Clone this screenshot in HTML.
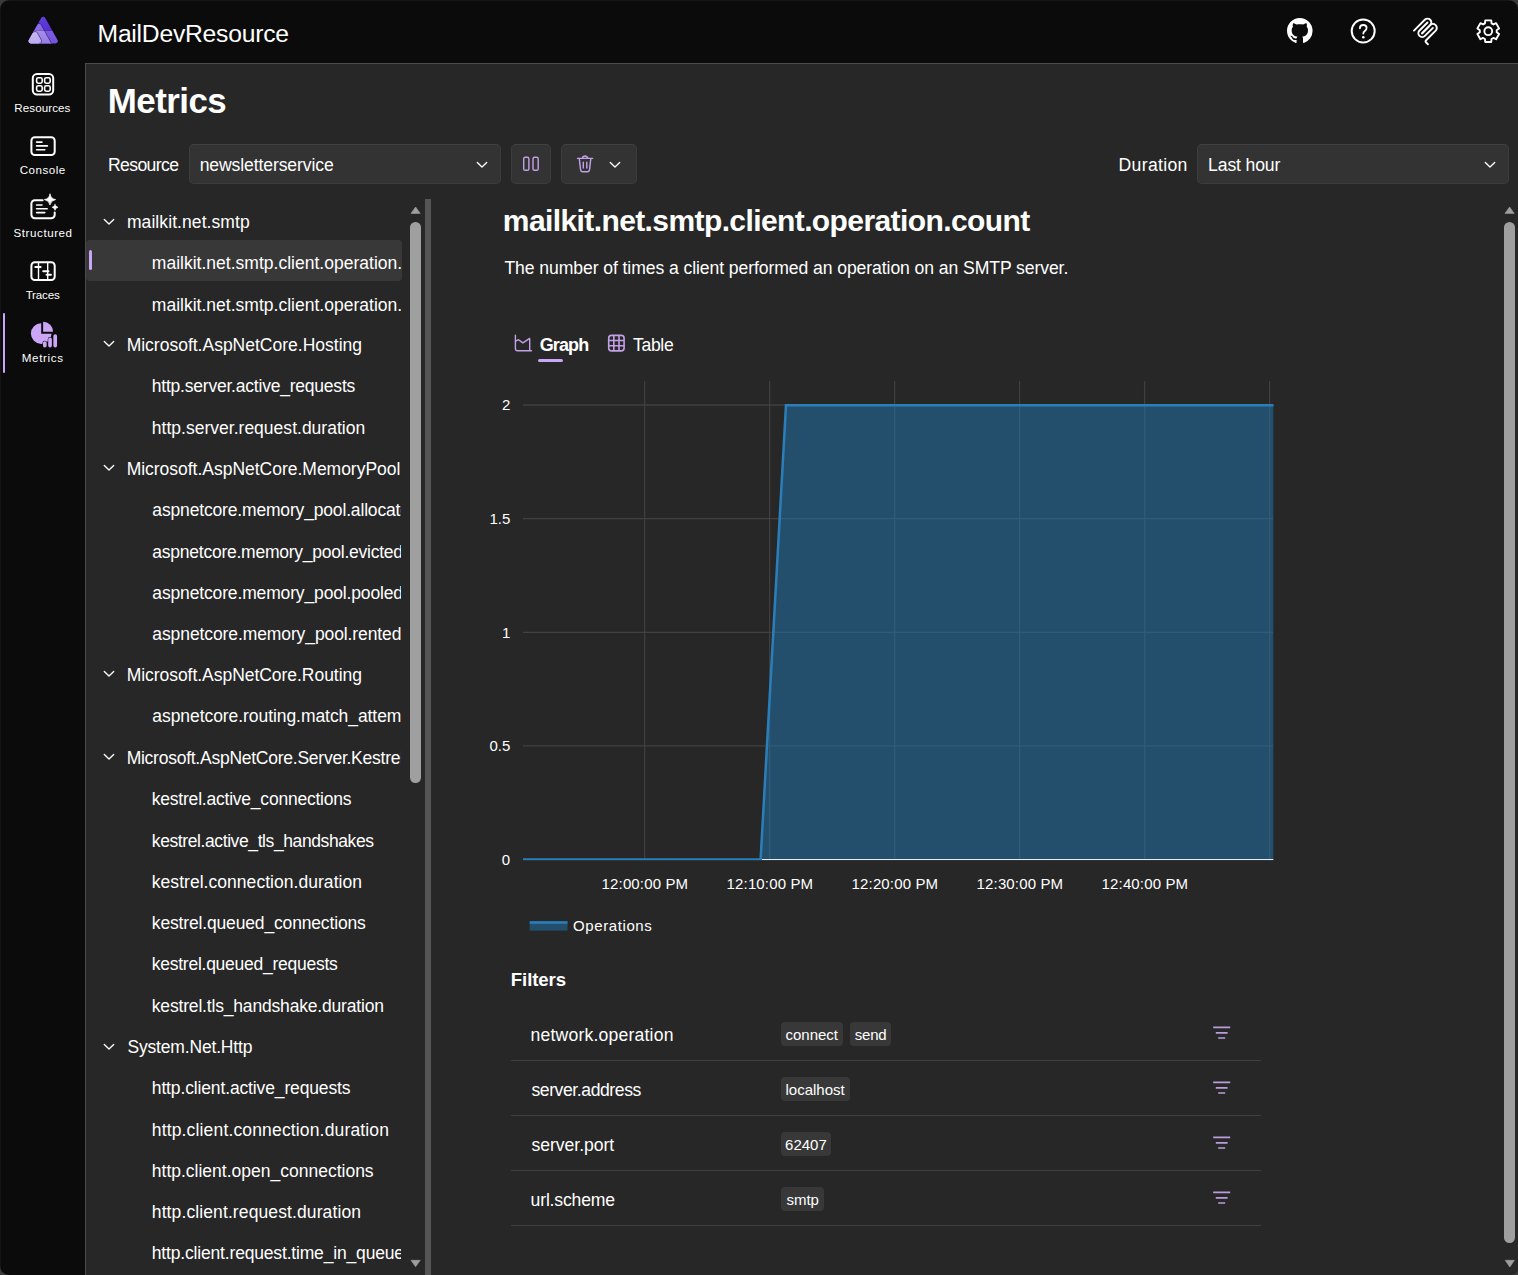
<!DOCTYPE html>
<html lang="en"><head><meta charset="utf-8"><title>MailDevResource - Metrics</title><style>
*{box-sizing:border-box}
html,body{margin:0;padding:0}
body{width:1518px;height:1275px;position:relative;overflow:hidden;background:#0b0b0b;color:#fff;font-family:"Liberation Sans",sans-serif;}
.abs{position:absolute;display:block}
.t{position:absolute;white-space:pre;color:#fff;line-height:0}
.t::before{content:"";display:inline-block;width:0;height:40px}
.k{transform:scale(0.9375);transform-origin:0 40px}
.hdr,.nav,.main{position:absolute;left:0;top:0;width:0;height:0}
.mainbg{position:absolute;left:85px;top:63px;width:1433px;height:1212px;background:#272727;border-left:1px solid #4a4a4a;border-top:1px solid #4a4a4a}
.sel{position:absolute;background:#333;border:1px solid #3c3c3c;border-top-color:#414141;border-radius:5px}
.tree{position:absolute;left:86px;top:200px;width:315.3px;height:1075px;overflow:hidden}
</style></head><body>
<header class="hdr">
<svg class="abs" style="left:24px;top:12.7px" width="38" height="34" viewBox="24 13 38 34">
<defs>
<clipPath id="tri"><path d="M41.160 17.900 A2.340 2.340 0 0 1 45.240 17.900 L57.550 39.920 A2.340 2.340 0 0 1 55.510 43.400 L30.890 43.400 A2.340 2.340 0 0 1 28.850 39.920 Z"/></clipPath>
<linearGradient id="lg1" x1="0" y1="0" x2="0.600" y2="1"><stop offset="0" stop-color="#6b47e1"/><stop offset="1" stop-color="#5630d6"/></linearGradient>
<linearGradient id="lg2" x1="0" y1="0" x2="0.600" y2="1"><stop offset="0" stop-color="#8262e4"/><stop offset="1" stop-color="#7350dc"/></linearGradient>
<linearGradient id="lg3" x1="0" y1="0" x2="0" y2="1"><stop offset="0" stop-color="#8b70e4"/><stop offset="1" stop-color="#7d5fde"/></linearGradient>
<linearGradient id="lg4" x1="0" y1="0" x2="0.500" y2="1"><stop offset="0" stop-color="#ab95ef"/><stop offset="1" stop-color="#957ce5"/></linearGradient>
<linearGradient id="lg5" x1="0" y1="0" x2="0.300" y2="1"><stop offset="0" stop-color="#c8baf3"/><stop offset="1" stop-color="#bcaaee"/></linearGradient>
</defs>
<g clip-path="url(#tri)">
<rect x="24" y="13" width="38" height="17.500" fill="url(#lg1)"/>
<rect x="24" y="30.500" width="38" height="17" fill="url(#lg2)"/>
<path d="M20 46 L37.500 24.430 A2 2 0 0 1 40.980 24.430 L44.380 30.500 L20 30.500 Z" fill="url(#lg3)"/>
<path d="M20 30.500 L44.380 30.500 L53.060 46 L20 46 Z" fill="url(#lg4)"/>
<path d="M30 30.500 H57" stroke="#2a1580" stroke-opacity="0.450" stroke-width="0.450"/>
<path d="M37.500 24.430 A2 2 0 0 1 40.980 24.430 L53.060 46" fill="none" stroke="#190b4d" stroke-width="0.550"/>
<path d="M20 46 L32.790 32.840 A2.600 2.600 0 0 1 37.330 32.840 L41.340 39.980 A2.300 2.300 0 0 1 39.330 43.400 L39.330 46 Z" fill="url(#lg5)"/>
<path d="M32.790 32.840 A2.600 2.600 0 0 1 37.330 32.840 L41.340 39.980 A2.300 2.300 0 0 1 39.330 43.400" fill="none" stroke="#190b4d" stroke-width="0.550"/>
</g>
</svg>
<span class="t" style="left:97.57px;top:1.70px;font-size:24.7px;letter-spacing:-0.242px;">MailDevResource</span>
<svg class="abs" style="left:1287.3px;top:18.2px" width="25.6" height="25.6" viewBox="0 0 16 16"><path fill="#fff" d="M8 0C3.58 0 0 3.58 0 8c0 3.54 2.29 6.53 5.47 7.59.4.07.55-.17.55-.38 0-.19-.01-.82-.01-1.49-2.01.37-2.53-.49-2.69-.94-.09-.23-.48-.94-.82-1.13-.28-.15-.68-.52-.01-.53.63-.01 1.08.58 1.23.82.72 1.21 1.87.87 2.33.66.07-.52.28-.87.51-1.07-1.78-.2-3.64-.89-3.64-3.95 0-.87.31-1.59.82-2.15-.08-.2-.36-1.02.08-2.12 0 0 .67-.21 2.2.82.64-.18 1.32-.27 2-.27s1.36.09 2 .27c1.53-1.04 2.2-.82 2.2-.82.44 1.1.16 1.92.08 2.12.51.56.82 1.27.82 2.15 0 3.07-1.87 3.75-3.65 3.95.29.25.54.73.54 1.48 0 1.07-.01 1.93-.01 2.2 0 .21.15.46.55.38A8.01 8.01 0 0 0 16 8c0-4.42-3.58-8-8-8Z"/></svg>
<svg class="abs" style="left:1347.7px;top:16px" width="30" height="30" viewBox="0 0 30 30"><circle cx="15.2" cy="15" r="11.5" fill="none" stroke="#fff" stroke-width="2"/><path d="M11.9 12.3c0-2 1.5-3.3 3.4-3.3s3.3 1.3 3.3 3c0 1.500-.8 2.200-1.800 3.000-.9.700-1.500 1.300-1.500 2.600" fill="none" stroke="#fff" stroke-width="1.8" stroke-linecap="round"/><circle cx="15.3" cy="21.2" r="1.3" fill="#fff"/></svg>
<svg class="abs" style="left:1410.1px;top:15.3px" width="31.1" height="31.1" viewBox="0 0 195 195" fill="none" stroke="#fff" stroke-width="12" stroke-linecap="round">
<path d="M25 97.8528L92.8823 29.9706C102.255 20.598 117.451 20.598 126.823 29.9706V29.9706C136.196 39.3431 136.196 54.5391 126.823 63.9117L75.5581 115.177"/>
<path d="M76.2653 114.47L126.823 63.9117C136.196 54.5391 151.392 54.5391 160.765 63.9117L161.118 64.2652C170.491 73.6378 170.491 88.8338 161.118 98.2063L99.7248 159.6C96.6006 162.724 96.6006 167.789 99.7248 170.913L112.331 183.52"/>
<path d="M109.853 46.9411L59.6482 97.1457C50.2757 106.518 50.2757 121.714 59.6482 131.087V131.087C69.0208 140.459 84.2168 140.459 93.5894 131.087L143.794 80.8822"/>
</svg>
<svg class="abs" style="left:1473px;top:16px" width="30" height="30" viewBox="0 0 30 30"><path d="M11.94 7.37 L12.26 4.41 L18.24 4.41 L18.56 7.37 L20.38 8.42 L23.10 7.22 L26.09 12.39 L23.69 14.15 L23.69 16.25 L26.09 18.01 L23.10 23.18 L20.38 21.98 L18.56 23.03 L18.24 25.99 L12.26 25.99 L11.94 23.03 L10.12 21.98 L7.40 23.18 L4.41 18.01 L6.81 16.25 L6.81 14.15 L4.41 12.39 L7.40 7.22 L10.12 8.42 Z" fill="none" stroke="#fff" stroke-width="1.9" stroke-linejoin="round"/><circle cx="15.250" cy="15.200" r="3.900" fill="none" stroke="#fff" stroke-width="1.9"/></svg>
</header>
<nav class="nav">
<svg class="abs" style="left:28px;top:69px" width="30" height="30" viewBox="28 69 30 30" fill="none" stroke="#fff">
<rect x="32.800" y="73.900" width="20.400" height="20.500" rx="4.200" stroke-width="2"/>
<rect x="36.6" y="77.8" width="5.6" height="5.4" rx="1.6" stroke-width="1.6"/><rect x="44.6" y="77.8" width="5.6" height="5.4" rx="1.6" stroke-width="1.6"/>
<rect x="36.6" y="85.8" width="5.6" height="5.4" rx="1.6" stroke-width="1.6"/><rect x="44.6" y="85.8" width="5.6" height="5.4" rx="1.6" stroke-width="1.6"/>
</svg>
<span class="t" style="left:14.30px;top:71.70px;font-size:11.6px;letter-spacing:0.079px;">Resources</span>
<svg class="abs" style="left:28px;top:131px" width="30" height="30" viewBox="28 131 30 30" fill="none" stroke="#fff" stroke-linecap="round">
<rect x="31.4" y="137.3" width="23.3" height="17.8" rx="3.4" stroke-width="2"/>
<path d="M36.6 142.1H42M36.6 145.9H47.4M36.6 149.7H44.8" stroke-width="1.6"/>
</svg>
<span class="t" style="left:19.75px;top:133.70px;font-size:11.6px;letter-spacing:0.486px;">Console</span>
<svg class="abs" style="left:28px;top:190px" width="32" height="32" viewBox="28 190 32 32" fill="none" stroke="#fff" stroke-linecap="round">
<path d="M42.6 200.2H34.8a3.4 3.4 0 0 0-3.4 3.4V214.800a3.400 3.400 0 0 0 3.400 3.400H51.300a3.400 3.400 0 0 0 3.400-3.400V212.600" stroke-width="2"/>
<path d="M36.6 205H42M36.6 208.8H47.2M36.6 212.6H44.8" stroke-width="1.6"/>
<path d="M50 194.200 Q50.800 198.800 55.600 199.600 Q50.800 200.400 50 205 Q49.200 200.400 44.400 199.600 Q49.200 198.800 50 194.200Z" fill="#fff" stroke="#fff" stroke-width="0.8" stroke-linejoin="round"/>
<path d="M55 204.300 Q55.500 206.900 58.100 207.300 Q55.500 207.800 55 210.400 Q54.500 207.800 51.900 207.300 Q54.500 206.900 55 204.300Z" fill="#fff" stroke="#fff" stroke-width="0.5" stroke-linejoin="round"/>
</svg>
<span class="t" style="left:13.55px;top:196.50px;font-size:11.6px;letter-spacing:0.557px;">Structured</span>
<svg class="abs" style="left:28px;top:256px" width="30" height="30" viewBox="28 256 30 30" fill="none" stroke="#fff" stroke-linecap="round">
<rect x="31.4" y="262.3" width="23.3" height="17.8" rx="3.4" stroke-width="2"/>
<path d="M38.5 262.5V280M47.7 262.5V280" stroke-width="1.4"/>
<path d="M35.4 267H40.6M43.300 271.250H48.400M46.600 274.800H50.900" stroke-width="2.1"/>
</svg>
<span class="t" style="left:25.65px;top:258.70px;font-size:11.6px;letter-spacing:-0.190px;">Traces</span>
<svg class="abs" style="left:28px;top:318px" width="32" height="32" viewBox="28 318 32 32">
<path d="M41.200 323.300 A10.300 10.300 0 1 0 51.500 333.800 L41.200 333.800 Z" fill="#cba6f7"/>
<path d="M43.100 321.700 A10 10 0 0 1 53.100 331.800 L43.100 331.800 Z" fill="#cba6f7"/>
<g stroke="#0b0b0b" stroke-width="4.6" stroke-linecap="round"><path d="M44.800 343.100V345.600M50.050 339.400V345.600M55.200 336.100V345.600"/></g>
<g stroke="#cba6f7" stroke-width="3.7" stroke-linecap="round"><path d="M44.800 343.100V345.600M50.050 339.400V345.600M55.200 336.100V345.600"/></g>
</svg>
<span class="t" style="left:21.75px;top:321.60px;font-size:11.6px;letter-spacing:0.665px;">Metrics</span>
<div class="abs" style="left:3px;top:313.2px;width:2.2px;height:59.4px;background:#cba6f7;border-radius:1px"></div>
</nav>
<div class="mainbg"></div>
<div class="abs" style="left:0;top:0;width:1518px;height:1px;background:#161616"></div><div class="abs" style="left:0;top:0;width:1px;height:1275px;background:#131313"></div>
<main class="main">
<span class="t" style="left:107.82px;top:73.30px;font-size:34.9px;letter-spacing:-0.545px;font-weight:700;">Metrics</span>
<span class="t" style="left:107.92px;top:130.80px;font-size:17.6px;letter-spacing:-0.601px;">Resource</span>
<div class="sel" style="left:189px;top:144.3px;width:312px;height:39.4px"></div>
<span class="t" style="left:199.70px;top:130.80px;font-size:17.6px;letter-spacing:-0.119px;">newsletterservice</span>
<svg class="abs" style="left:475.60px;top:160.60px" width="12" height="8" viewBox="0 0 12 8"><path d="M1.300 1.500 L6 6 L10.700 1.500" fill="none" stroke="#fff" stroke-width="1.350" stroke-linecap="round" stroke-linejoin="round"/></svg>
<div class="sel" style="left:511px;top:144.3px;width:40px;height:39.4px"></div>
<svg class="abs" style="left:521px;top:154px" width="20" height="20" viewBox="521 154 20 20" fill="none" stroke="#c3a1e8" stroke-width="1.4"><rect x="523.7" y="157.3" width="5.2" height="13" rx="1.6"/><rect x="533" y="157.3" width="5.2" height="13" rx="1.6"/></svg>
<div class="sel" style="left:561px;top:144.3px;width:76px;height:39.4px"></div>
<svg class="abs" style="left:575px;top:153px" width="20" height="22" viewBox="575 153 20 22" fill="none" stroke="#c3a1e8" stroke-width="1.4" stroke-linecap="round" stroke-linejoin="round">
<path d="M577.5 158.400H592.600M582.400 158.200a2.700 2.700 0 0 1 5.300 0M579.300 158.600l1.300 11.300a2.200 2.200 0 0 0 2.200 1.900h4.500a2.200 2.200 0 0 0 2.200-1.900l1.300-11.300M583.300 162.300v5.700M586.800 162.300v5.700"/></svg>
<svg class="abs" style="left:609.20px;top:160.70px" width="12" height="8" viewBox="0 0 12 8"><path d="M1.300 1.500 L6 6 L10.700 1.500" fill="none" stroke="#fff" stroke-width="1.350" stroke-linecap="round" stroke-linejoin="round"/></svg>
<span class="t" style="left:1118.62px;top:130.80px;font-size:17.6px;letter-spacing:0.309px;">Duration</span>
<div class="sel" style="left:1197px;top:144.3px;width:312px;height:39.4px"></div>
<span class="t" style="left:1208.12px;top:130.80px;font-size:17.6px;letter-spacing:-0.137px;">Last hour</span>
<svg class="abs" style="left:1483.50px;top:160.60px" width="12" height="8" viewBox="0 0 12 8"><path d="M1.300 1.500 L6 6 L10.700 1.500" fill="none" stroke="#fff" stroke-width="1.350" stroke-linecap="round" stroke-linejoin="round"/></svg>
<div class="abs" style="left:86px;top:240.250px;width:316px;height:40.800px;background:#383838;border-radius:4px"></div>
<div class="tree">
<svg class="abs" style="left:17.30px;top:17.70px" width="12" height="8" viewBox="0 0 12 8"><path d="M1.300 1.500 L6 6 L10.700 1.500" fill="none" stroke="#fff" stroke-width="1.350" stroke-linecap="round" stroke-linejoin="round"/></svg>
<span class="t" style="left:40.91px;top:-12.00px;font-size:17.5px;letter-spacing:0.083px;">mailkit.net.smtp</span>
<div class="abs" style="left:3.2px;top:50.05px;width:3.2px;height:20.4px;background:#cba6f7;border-radius:1.6px"></div>
<span class="t" style="left:65.81px;top:29.00px;font-size:17.5px;letter-spacing:0.012px;">mailkit.net.smtp.client.operation.count</span>
<span class="t" style="left:65.81px;top:71.00px;font-size:17.5px;letter-spacing:0.012px;">mailkit.net.smtp.client.operation.duration</span>
<svg class="abs" style="left:17.30px;top:140.45px" width="12" height="8" viewBox="0 0 12 8"><path d="M1.300 1.500 L6 6 L10.700 1.500" fill="none" stroke="#fff" stroke-width="1.350" stroke-linecap="round" stroke-linejoin="round"/></svg>
<span class="t" style="left:40.63px;top:111.00px;font-size:17.5px;">Microsoft.AspNetCore.Hosting</span>
<span class="t" style="left:65.81px;top:152.00px;font-size:17.5px;letter-spacing:-0.217px;">http.server.active_requests</span>
<span class="t" style="left:65.81px;top:194.00px;font-size:17.5px;letter-spacing:0.014px;">http.server.request.duration</span>
<svg class="abs" style="left:17.30px;top:264.20px" width="12" height="8" viewBox="0 0 12 8"><path d="M1.300 1.500 L6 6 L10.700 1.500" fill="none" stroke="#fff" stroke-width="1.350" stroke-linecap="round" stroke-linejoin="round"/></svg>
<span class="t" style="left:40.63px;top:235.00px;font-size:17.5px;letter-spacing:-0.016px;">Microsoft.AspNetCore.MemoryPool</span>
<span class="t" style="left:66.35px;top:276.00px;font-size:17.5px;letter-spacing:-0.166px;">aspnetcore.memory_pool.allocated</span>
<span class="t" style="left:66.35px;top:318.00px;font-size:17.5px;letter-spacing:-0.246px;">aspnetcore.memory_pool.evicted</span>
<span class="t" style="left:66.35px;top:359.00px;font-size:17.5px;letter-spacing:-0.148px;">aspnetcore.memory_pool.pooled</span>
<span class="t" style="left:66.35px;top:400.00px;font-size:17.5px;letter-spacing:-0.101px;">aspnetcore.memory_pool.rented</span>
<svg class="abs" style="left:17.30px;top:470.45px" width="12" height="8" viewBox="0 0 12 8"><path d="M1.300 1.500 L6 6 L10.700 1.500" fill="none" stroke="#fff" stroke-width="1.350" stroke-linecap="round" stroke-linejoin="round"/></svg>
<span class="t" style="left:40.63px;top:441.00px;font-size:17.5px;letter-spacing:-0.037px;">Microsoft.AspNetCore.Routing</span>
<span class="t" style="left:66.35px;top:482.00px;font-size:17.5px;letter-spacing:-0.066px;">aspnetcore.routing.match_attempts</span>
<svg class="abs" style="left:17.30px;top:552.95px" width="12" height="8" viewBox="0 0 12 8"><path d="M1.300 1.500 L6 6 L10.700 1.500" fill="none" stroke="#fff" stroke-width="1.350" stroke-linecap="round" stroke-linejoin="round"/></svg>
<span class="t" style="left:40.63px;top:524.00px;font-size:17.5px;letter-spacing:-0.249px;">Microsoft.AspNetCore.Server.Kestrel</span>
<span class="t" style="left:65.81px;top:565.00px;font-size:17.5px;letter-spacing:-0.220px;">kestrel.active_connections</span>
<span class="t" style="left:65.81px;top:607.00px;font-size:17.5px;letter-spacing:-0.401px;">kestrel.active_tls_handshakes</span>
<span class="t" style="left:65.81px;top:648.00px;font-size:17.5px;letter-spacing:0.039px;">kestrel.connection.duration</span>
<span class="t" style="left:65.81px;top:689.00px;font-size:17.5px;letter-spacing:-0.158px;">kestrel.queued_connections</span>
<span class="t" style="left:65.81px;top:730.00px;font-size:17.5px;letter-spacing:-0.257px;">kestrel.queued_requests</span>
<span class="t" style="left:65.81px;top:772.00px;font-size:17.5px;letter-spacing:-0.179px;">kestrel.tls_handshake.duration</span>
<svg class="abs" style="left:17.30px;top:842.70px" width="12" height="8" viewBox="0 0 12 8"><path d="M1.300 1.500 L6 6 L10.700 1.500" fill="none" stroke="#fff" stroke-width="1.350" stroke-linecap="round" stroke-linejoin="round"/></svg>
<span class="t" style="left:41.45px;top:813.00px;font-size:17.5px;letter-spacing:-0.171px;">System.Net.Http</span>
<span class="t" style="left:65.81px;top:854.00px;font-size:17.5px;letter-spacing:-0.138px;">http.client.active_requests</span>
<span class="t" style="left:65.81px;top:896.00px;font-size:17.5px;letter-spacing:0.155px;">http.client.connection.duration</span>
<span class="t" style="left:65.81px;top:937.00px;font-size:17.5px;">http.client.open_connections</span>
<span class="t" style="left:65.81px;top:978.00px;font-size:17.5px;letter-spacing:0.109px;">http.client.request.duration</span>
<span class="t" style="left:65.81px;top:1019.00px;font-size:17.5px;letter-spacing:-0.174px;">http.client.request.time_in_queue</span>
</div>
<svg class="abs" style="left:409px;top:205px" width="13" height="10" viewBox="409 205 13 10"><path d="M411 213.400 L415.600 207 L420.200 213.400 Z" fill="#9f9f9f" stroke="#9f9f9f" stroke-width="0.6" stroke-linejoin="round"/></svg>
<div class="abs" style="left:410.4px;top:221.700px;width:10.8px;height:561px;background:#9f9f9f;border-radius:5.4px"></div>
<svg class="abs" style="left:409px;top:1258px" width="13" height="10" viewBox="409 1258 13 10"><path d="M411 1260.300 L415.600 1266.700 L420.200 1260.300 Z" fill="#9f9f9f" stroke="#9f9f9f" stroke-width="0.6" stroke-linejoin="round"/></svg>
<div class="abs" style="left:425px;top:198.700px;width:6px;height:1077px;background:#555"></div>
<span class="t" style="left:502.82px;top:190.50px;font-size:30px;letter-spacing:-0.598px;font-weight:700;">mailkit.net.smtp.client.operation.count</span>
<span class="t" style="left:504.43px;top:233.70px;font-size:17.6px;letter-spacing:-0.086px;">The number of times a client performed an operation on an SMTP server.</span>
<svg class="abs" style="left:512px;top:333px" width="22" height="21" viewBox="512 333 22 21" fill="none" stroke="#c3a1e8" stroke-width="1.4" stroke-linecap="round" stroke-linejoin="round"><path d="M515.400 335.300V348.600a2.200 2.200 0 0 0 2.200 2.200H531.500M529.700 350.600V338.400L522.900 342.900L518.500 339.700L515.700 341.200"/></svg>
<span class="t" style="left:539.74px;top:310.50px;font-size:18px;letter-spacing:-0.894px;font-weight:700;">Graph</span>
<div class="abs" style="left:538px;top:358.600px;width:25px;height:3.5px;background:#cba6f7;border-radius:1.75px"></div>
<svg class="abs" style="left:606px;top:333px" width="21" height="21" viewBox="606 333 21 21" fill="none" stroke="#c3a1e8" stroke-width="1.600"><rect x="608.700" y="335.400" width="15.400" height="15.500" rx="2.800"/><path d="M613.800 335.400V350.900M619 335.400V350.900M608.700 340.500H624.100M608.700 345.700H624.100"/></svg>
<span class="t" style="left:633.02px;top:310.50px;font-size:17.6px;letter-spacing:-0.343px;">Table</span>
<svg class="abs" style="left:480px;top:370px" width="820" height="580" viewBox="480 370 820 580"><line x1="644.6" y1="381" x2="644.6" y2="859" stroke="#3f3f3f" stroke-width="1.25"/><line x1="769.6" y1="381" x2="769.6" y2="859" stroke="#3f3f3f" stroke-width="1.25"/><line x1="894.6" y1="381" x2="894.6" y2="859" stroke="#3f3f3f" stroke-width="1.25"/><line x1="1019.6" y1="381" x2="1019.6" y2="859" stroke="#3f3f3f" stroke-width="1.25"/><line x1="1144.6" y1="381" x2="1144.6" y2="859" stroke="#3f3f3f" stroke-width="1.25"/><line x1="1269.6" y1="381" x2="1269.6" y2="859" stroke="#3f3f3f" stroke-width="1.25"/><line x1="523" y1="405" x2="1273" y2="405" stroke="#414141" stroke-width="1.3"/><line x1="523" y1="518.6" x2="1273" y2="518.6" stroke="#414141" stroke-width="1.3"/><line x1="523" y1="632.3" x2="1273" y2="632.3" stroke="#414141" stroke-width="1.3"/><line x1="523" y1="745.9" x2="1273" y2="745.9" stroke="#414141" stroke-width="1.3"/><clipPath id="plot"><rect x="523" y="381" width="750.600" height="479.200"/></clipPath><g clip-path="url(#plot)"><path d="M523 859.600 L760.600 859.600 L786 405.200 L1273.600 405.200 L1273.600 859.600 Z" fill="rgba(31,119,180,0.5)"/><line x1="762" y1="859.650" x2="1273.600" y2="859.650" stroke="#e3ecf4" stroke-width="1.300"/><path d="M523 859.600 L760.600 859.600 L786 405.200 L1275 405.200" fill="none" stroke="#2a7fba" stroke-width="2.500" stroke-linejoin="miter"/></g><rect x="529.700" y="921.300" width="37.800" height="9.300" fill="rgba(31,119,180,0.5)"/><line x1="529.700" y1="922.500" x2="567.500" y2="922.500" stroke="#2a7fba" stroke-width="2.5"/></svg>
<span class="t" style="left:501.97px;top:370.40px;font-size:15px;">2</span>
<span class="t" style="left:489.46px;top:484.00px;font-size:15px;">1.5</span>
<span class="t" style="left:501.97px;top:597.70px;font-size:15px;">1</span>
<span class="t" style="left:489.46px;top:711.30px;font-size:15px;">0.5</span>
<span class="t" style="left:501.73px;top:824.80px;font-size:15px;">0</span>
<span class="t" style="left:601.61px;top:849.20px;font-size:15px;letter-spacing:0.139px;">12:00:00 PM</span>
<span class="t" style="left:726.61px;top:849.20px;font-size:15px;letter-spacing:0.139px;">12:10:00 PM</span>
<span class="t" style="left:851.61px;top:849.20px;font-size:15px;letter-spacing:0.139px;">12:20:00 PM</span>
<span class="t" style="left:976.61px;top:849.20px;font-size:15px;letter-spacing:0.139px;">12:30:00 PM</span>
<span class="t" style="left:1101.61px;top:849.20px;font-size:15px;letter-spacing:0.139px;">12:40:00 PM</span>
<span class="t" style="left:573.10px;top:890.80px;font-size:15px;letter-spacing:0.589px;">Operations</span>
<span class="t" style="left:510.84px;top:945.80px;font-size:18.6px;letter-spacing:-0.097px;font-weight:700;">Filters</span>
<span class="t" style="left:530.60px;top:1000.80px;font-size:17.6px;letter-spacing:0.189px;">network.operation</span>
<div class="abs" style="left:781.2px;top:1022.2px;width:61.6px;height:23.6px;background:#383838;border-radius:4px"></div>
<span class="t" style="left:785.48px;top:999.70px;font-size:15px;letter-spacing:-0.003px;">connect</span>
<div class="abs" style="left:850px;top:1022.2px;width:40.8px;height:23.6px;background:#383838;border-radius:4px"></div>
<span class="t" style="left:854.87px;top:999.70px;font-size:15px;letter-spacing:-0.283px;">send</span>
<svg class="abs" style="left:1211px;top:1024px" width="22" height="18" viewBox="0 0 22 18" stroke="#bb9ddb" stroke-width="1.700" stroke-linecap="butt"><path d="M2.200 3.400H19.200M4.800 8.800H16.600M7.200 14H14.200"/></svg>
<div class="abs" style="left:511px;top:1059.8px;width:750px;height:1px;background:#404040"></div>
<span class="t" style="left:531.43px;top:1055.80px;font-size:17.6px;letter-spacing:-0.420px;">server.address</span>
<div class="abs" style="left:781.2px;top:1077.2px;width:68.8px;height:23.6px;background:#383838;border-radius:4px"></div>
<span class="t" style="left:785.50px;top:1054.70px;font-size:15px;">localhost</span>
<svg class="abs" style="left:1211px;top:1079px" width="22" height="18" viewBox="0 0 22 18" stroke="#bb9ddb" stroke-width="1.700" stroke-linecap="butt"><path d="M2.200 3.400H19.200M4.800 8.800H16.600M7.200 14H14.200"/></svg>
<div class="abs" style="left:511px;top:1114.8px;width:750px;height:1px;background:#404040"></div>
<span class="t" style="left:531.43px;top:1110.80px;font-size:17.6px;letter-spacing:-0.030px;">server.port</span>
<div class="abs" style="left:781.2px;top:1132.2px;width:49.6px;height:23.6px;background:#383838;border-radius:4px"></div>
<span class="t" style="left:785.10px;top:1109.70px;font-size:15px;">62407</span>
<svg class="abs" style="left:1211px;top:1134px" width="22" height="18" viewBox="0 0 22 18" stroke="#bb9ddb" stroke-width="1.700" stroke-linecap="butt"><path d="M2.200 3.400H19.200M4.800 8.800H16.600M7.200 14H14.200"/></svg>
<div class="abs" style="left:511px;top:1169.8px;width:750px;height:1px;background:#404040"></div>
<span class="t" style="left:530.60px;top:1165.80px;font-size:17.6px;letter-spacing:-0.181px;">url.scheme</span>
<div class="abs" style="left:781.2px;top:1187.2px;width:42.6px;height:23.6px;background:#383838;border-radius:4px"></div>
<span class="t" style="left:786.43px;top:1164.70px;font-size:15px;">smtp</span>
<svg class="abs" style="left:1211px;top:1189px" width="22" height="18" viewBox="0 0 22 18" stroke="#bb9ddb" stroke-width="1.700" stroke-linecap="butt"><path d="M2.200 3.400H19.200M4.800 8.800H16.600M7.200 14H14.200"/></svg>
<div class="abs" style="left:511px;top:1224.8px;width:750px;height:1px;background:#404040"></div>
<svg class="abs" style="left:1503px;top:205px" width="13" height="10" viewBox="1503 205 13 10"><path d="M1505 213.400 L1509.600 207 L1514.200 213.400 Z" fill="#9f9f9f" stroke="#9f9f9f" stroke-width="0.6" stroke-linejoin="round"/></svg>
<div class="abs" style="left:1504.200px;top:221.700px;width:11px;height:1021.500px;background:#9f9f9f;border-radius:5.500px"></div>
<svg class="abs" style="left:1503px;top:1258px" width="13" height="10" viewBox="1503 1258 13 10"><path d="M1505.200 1260.300 L1509.800 1267 L1514.400 1260.300 Z" fill="#9f9f9f" stroke="#9f9f9f" stroke-width="0.6" stroke-linejoin="round"/></svg>
</main>
<svg class="abs" style="left:0;top:0" width="10" height="10"><path d="M0 0H9.500A9.500 9.500 0 0 0 0 9.500Z" fill="#3a3a3a"/></svg>
<svg class="abs" style="left:1508px;top:0" width="10" height="10"><path d="M10 0H0.500A9.500 9.500 0 0 1 10 9.500Z" fill="#3a3a3a"/></svg>
<svg class="abs" style="left:0;top:1265px" width="10" height="10"><path d="M0 10H9A9 9 0 0 1 0 1Z" fill="#3a3a3a"/></svg>
<svg class="abs" style="left:1508px;top:1265px" width="10" height="10"><path d="M10 10H3A7 7 0 0 0 10 3Z" fill="#3a3a3a"/></svg>
</body></html>
